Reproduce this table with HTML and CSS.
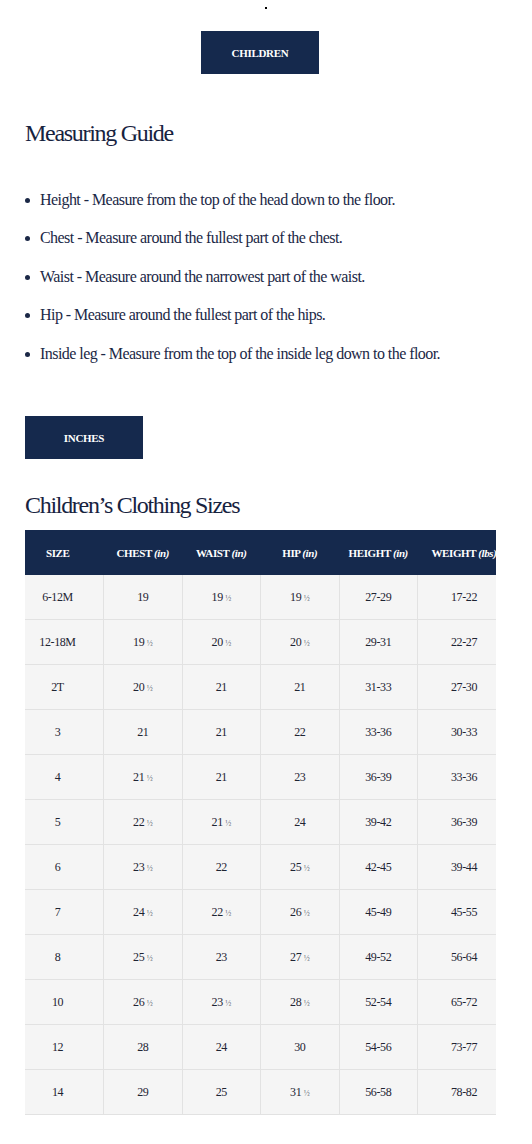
FILE: index.html
```html
<!DOCTYPE html>
<html lang="en">
<head>
    <meta charset="UTF-8">
    <meta name="viewport" content="width=device-width, initial-scale=1.0">
    <title>Size Guide - Children</title>
    <link rel="stylesheet" href="styles.css">
</head>
<body>
    <div class="top-dot"></div>

    <div class="tab-row">
        <button class="size-btn">CHILDREN</button>
    </div>

    <h2 class="section-title">Measuring Guide</h2>
    <ul class="guide-list">
        <li>Height - Measure from the top of the head down to the floor.</li>
        <li>Chest - Measure around the fullest part of the chest.</li>
        <li>Waist - Measure around the narrowest part of the waist.</li>
        <li>Hip - Measure around the fullest part of the hips.</li>
        <li>Inside leg - Measure from the top of the inside leg down to the floor.</li>
    </ul>

    <button class="size-btn unit-btn">INCHES</button>

    <h2 class="section-title table-title">Children’s Clothing Sizes</h2>
    <div class="table-wrap">
        <table class="size-table">
            <colgroup>
                <col class="col-size">
                <col><col><col><col>
                <col class="col-weight">
            </colgroup>
            <thead>
                <tr>
                    <th>SIZE</th>
                    <th>CHEST <em>(in)</em></th>
                    <th>WAIST <em>(in)</em></th>
                    <th>HIP <em>(in)</em></th>
                    <th>HEIGHT <em>(in)</em></th>
                    <th>WEIGHT <em>(lbs)</em></th>
                </tr>
            </thead>
            <tbody>
                <tr><td>6-12M</td><td>19</td><td>19 <span class="frac">½</span></td><td>19 <span class="frac">½</span></td><td>27-29</td><td>17-22</td></tr>
                <tr><td>12-18M</td><td>19 <span class="frac">½</span></td><td>20 <span class="frac">½</span></td><td>20 <span class="frac">½</span></td><td>29-31</td><td>22-27</td></tr>
                <tr><td>2T</td><td>20 <span class="frac">½</span></td><td>21</td><td>21</td><td>31-33</td><td>27-30</td></tr>
                <tr><td>3</td><td>21</td><td>21</td><td>22</td><td>33-36</td><td>30-33</td></tr>
                <tr><td>4</td><td>21 <span class="frac">½</span></td><td>21</td><td>23</td><td>36-39</td><td>33-36</td></tr>
                <tr><td>5</td><td>22 <span class="frac">½</span></td><td>21 <span class="frac">½</span></td><td>24</td><td>39-42</td><td>36-39</td></tr>
                <tr><td>6</td><td>23 <span class="frac">½</span></td><td>22</td><td>25 <span class="frac">½</span></td><td>42-45</td><td>39-44</td></tr>
                <tr><td>7</td><td>24 <span class="frac">½</span></td><td>22 <span class="frac">½</span></td><td>26 <span class="frac">½</span></td><td>45-49</td><td>45-55</td></tr>
                <tr><td>8</td><td>25 <span class="frac">½</span></td><td>23</td><td>27 <span class="frac">½</span></td><td>49-52</td><td>56-64</td></tr>
                <tr><td>10</td><td>26 <span class="frac">½</span></td><td>23 <span class="frac">½</span></td><td>28 <span class="frac">½</span></td><td>52-54</td><td>65-72</td></tr>
                <tr><td>12</td><td>28</td><td>24</td><td>30</td><td>54-56</td><td>73-77</td></tr>
                <tr><td>14</td><td>29</td><td>25</td><td>31 <span class="frac">½</span></td><td>56-58</td><td>78-82</td></tr>
            </tbody>
        </table>
    </div>
</body>
</html>
```

FILE: styles.css
```css
body {
    margin: 0;
    padding: 0 25px;
    background-color: #fff;
    color: #1b2846;
    font-family: "Liberation Serif", "Times New Roman", serif;
}

.top-dot {
    width: 2px;
    height: 2px;
    margin: 7px auto 0;
    background-color: #000;
}

.tab-row {
    display: flex;
    justify-content: center;
    padding: 22px 12px 0 0;
}

.size-btn {
    display: block;
    width: 118px;
    height: 43px;
    padding: 0;
    border: none;
    border-radius: 0;
    background-color: #15294d;
    color: #fff;
    font-family: "Liberation Serif", "Times New Roman", serif;
    font-size: 11px;
    font-weight: bold;
    letter-spacing: -0.3px;
    cursor: pointer;
}

.section-title {
    margin: 45px 0 0;
    font-size: 24px;
    font-weight: normal;
    line-height: 28.8px;
    letter-spacing: -1.3px;
    color: #17233f;
}

.guide-list {
    list-style: none;
    margin: 40px 0 0;
    padding: 0;
}

.guide-list li {
    display: flex;
    align-items: center;
    gap: 10px;
    margin-bottom: 14px;
    font-size: 16px;
    line-height: 24.5px;
    letter-spacing: -0.55px;
}

.guide-list li::before {
    content: "";
    flex: none;
    width: 5px;
    height: 5px;
    border-radius: 50%;
    background-color: #1b2846;
}

.unit-btn {
    margin-top: 50px;
}

.table-title {
    margin-top: 32px;
}

.table-wrap {
    width: 471px;
    margin-top: 10px;
}

.size-table {
    width: 471px;
    table-layout: fixed;
    border-collapse: collapse;
    font-size: 12px;
}

.size-table col {
    width: 78.5px;
}

.size-table th,
.size-table td {
    height: 44px;
    padding: 0;
    text-align: center;
    vertical-align: middle;
    letter-spacing: -0.4px;
}

.size-table th:first-child,
.size-table td:first-child {
    padding-right: 13px;
}

.size-table th:last-child,
.size-table td:last-child {
    padding-left: 14px;
}

.size-table th {
    background-color: #15294d;
    color: #fff;
    font-size: 11px;
    font-weight: bold;
    height: 45px;
    white-space: nowrap;
}

.size-table th em {
    font-weight: bold;
}

.size-table td {
    background-color: #f5f5f5;
    border: 1px solid #e2e2e2;
    border-top: none;
    color: #1e2433;
}

.size-table td:first-child {
    border-left: none;
}

.size-table td:last-child {
    border-right: none;
}

.frac {
    font-size: 8px;
    color: #6a6f7a;
}
```
